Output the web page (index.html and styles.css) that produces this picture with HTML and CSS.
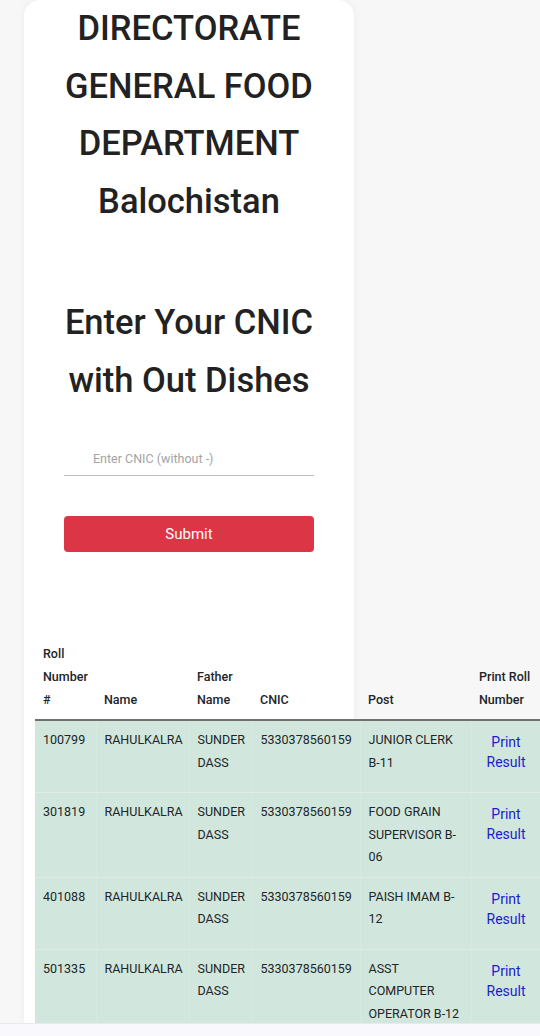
FILE: index.html
```html
<!DOCTYPE html>
<html>
<head>
    <title>Directorate General Food Department Balochistan</title>
    <link rel="stylesheet" href="styles.css">
</head>
<body>
    <div class="page">
        <div class="card">
            <h1 class="title">DIRECTORATE<br>GENERAL FOOD<br>DEPARTMENT<br>Balochistan</h1>
            <h2 class="title subtitle">Enter Your CNIC<br>with Out Dishes</h2>

            <form class="cnic-form" onsubmit="return false;">
                <input type="text" class="cnic-input" placeholder="Enter CNIC (without -)">
                <button type="submit" class="submit-btn">Submit</button>
            </form>

            <table class="result-table">
                <colgroup>
                    <col class="col-roll">
                    <col class="col-name">
                    <col class="col-father">
                    <col class="col-cnic">
                    <col class="col-post">
                    <col class="col-print">
                </colgroup>
                <thead>
                    <tr>
                        <th>Roll<br>Number<br>#</th>
                        <th>Name</th>
                        <th>Father<br>Name</th>
                        <th>CNIC</th>
                        <th>Post</th>
                        <th>Print Roll<br>Number</th>
                    </tr>
                </thead>
                <tbody>
                    <tr>
                        <td>100799</td>
                        <td>RAHULKALRA</td>
                        <td>SUNDER<br>DASS</td>
                        <td>5330378560159</td>
                        <td>JUNIOR CLERK<br>B-11</td>
                        <td><a href="#" class="print-link">Print<br>Result</a></td>
                    </tr>
                    <tr>
                        <td>301819</td>
                        <td>RAHULKALRA</td>
                        <td>SUNDER<br>DASS</td>
                        <td>5330378560159</td>
                        <td>FOOD GRAIN<br>SUPERVISOR B-<br>06</td>
                        <td><a href="#" class="print-link">Print<br>Result</a></td>
                    </tr>
                    <tr>
                        <td>401088</td>
                        <td>RAHULKALRA</td>
                        <td>SUNDER<br>DASS</td>
                        <td>5330378560159</td>
                        <td>PAISH IMAM B-<br>12</td>
                        <td><a href="#" class="print-link">Print<br>Result</a></td>
                    </tr>
                    <tr>
                        <td>501335</td>
                        <td>RAHULKALRA</td>
                        <td>SUNDER<br>DASS</td>
                        <td>5330378560159</td>
                        <td>ASST<br>COMPUTER<br>OPERATOR B-12</td>
                        <td><a href="#" class="print-link">Print<br>Result</a></td>
                    </tr>
                </tbody>
            </table>
        </div>
    </div>
    <div class="bottom-bar"></div>
</body>
</html>
```

FILE: styles.css
```css
html, body {
    margin: 0;
    overflow: hidden;
}

body {
    font-family: Roboto, "Liberation Sans", sans-serif;
    background-color: #f7f7f7;
    color: #212529;
}

.page {
    height: 1023px;
    padding-left: 24px;
    overflow: hidden;
}

.card {
    width: 330px;
    height: 1023px;
    background-color: #fff;
    border-radius: 16px 16px 0 0;
    box-shadow: 0 0 8px rgba(0, 0, 0, 0.05);
}

.title {
    margin: 0;
    font-size: 34.5px;
    line-height: 57.5px;
    font-weight: 500;
    color: #222;
    text-align: center;
    white-space: nowrap;
}

.subtitle {
    margin-top: 64px;
}

.cnic-form {
    width: 250px;
    margin: 32px auto 0;
}

.cnic-input {
    display: block;
    box-sizing: border-box;
    width: 100%;
    height: 35px;
    padding: 0 0 0 29px;
    border: none;
    border-bottom: 1px solid #bdbdbd;
    outline: none;
    background: transparent;
    font-family: Roboto, "Liberation Sans", sans-serif;
    font-size: 12.5px;
    color: #333;
}

.cnic-input::placeholder {
    color: #a3a3a3;
}

.submit-btn {
    display: block;
    width: 100%;
    height: 36px;
    margin-top: 40px;
    border: none;
    border-radius: 4px;
    background-color: #dc3545;
    color: #fff;
    font-family: Roboto, "Liberation Sans", sans-serif;
    font-size: 15px;
    cursor: pointer;
}

.result-table {
    margin: 82px 0 0 11px;
    width: 512px;
    table-layout: fixed;
    border-collapse: collapse;
    font-size: 12.5px;
    line-height: 22.5px;
}

.col-roll { width: 61px; }
.col-name { width: 93px; }
.col-father { width: 63px; }
.col-cnic { width: 108px; }
.col-post { width: 111px; }
.col-print { width: 76px; }

.result-table th {
    padding: 8px;
    text-align: left;
    vertical-align: bottom;
    font-weight: 500;
    line-height: 23px;
    border-bottom: 2px solid #707070;
    white-space: nowrap;
}

.result-table td {
    padding: 8px;
    vertical-align: top;
    background-color: #d1e7dd;
    border-bottom: 1px solid #e0ebe5;
    border-right: 1px solid #d6e9e0;
    white-space: nowrap;
}

.print-link {
    display: block;
    width: 53px;
    padding: 3px 0 12px;
    text-align: center;
    font-size: 14px;
    line-height: 20px;
    color: #1c1ccf;
    text-decoration: none;
}

.bottom-bar {
    height: 13px;
    background-color: #f9f8fc;
    border-top: 1px solid #ebe9f0;
}
```
